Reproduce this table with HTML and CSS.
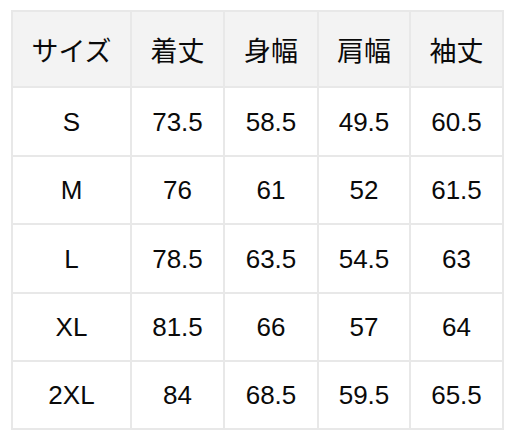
FILE: index.html
```html
<!DOCTYPE html>
<html lang="ja">
<head>
<meta charset="utf-8">
<title>サイズ表</title>
<link rel="stylesheet" href="styles.css">
</head>
<body>
<table class="size-table">
  <colgroup>
    <col class="c-size">
    <col class="c-a">
    <col class="c-b">
    <col class="c-c">
    <col class="c-d">
  </colgroup>
  <thead>
    <tr><th>サイズ</th><th>着丈</th><th>身幅</th><th>肩幅</th><th>袖丈</th></tr>
  </thead>
  <tbody>
    <tr><td>S</td><td>73.5</td><td>58.5</td><td>49.5</td><td>60.5</td></tr>
    <tr><td>M</td><td>76</td><td>61</td><td>52</td><td>61.5</td></tr>
    <tr><td>L</td><td>78.5</td><td>63.5</td><td>54.5</td><td>63</td></tr>
    <tr><td>XL</td><td>81.5</td><td>66</td><td>57</td><td>64</td></tr>
    <tr><td>2XL</td><td>84</td><td>68.5</td><td>59.5</td><td>65.5</td></tr>
  </tbody>
</table>
</body>
</html>
```

FILE: styles.css
```css
html, body {
  margin: 0;
  background: #ffffff;
}
body {
  padding: 10px 0 0 11px;
  font-family: "Liberation Sans", "Noto Sans CJK JP", sans-serif;
  color: #0a0a0a;
}
.size-table {
  table-layout: fixed;
  width: 493px;
  border-collapse: separate;
  border-spacing: 2px;
  background: #e8e8e8;
}
.c-size { width: 117px; }
.c-a { width: 91px; }
.c-b { width: 92px; }
.c-c { width: 90px; }
.c-d { width: 91px; }
.size-table th,
.size-table td {
  padding: 0;
  text-align: center;
  vertical-align: middle;
  font-size: 26px;
  font-weight: normal;
  line-height: 1;
  background: #ffffff;
}
.size-table th {
  background: #f3f3f3;
  height: 74px;
  font-family: "Noto Sans CJK JP", sans-serif;
  font-size: 27px;
}
.size-table tbody tr td { height: 66px; }
.size-table tbody tr:nth-child(1) td,
.size-table tbody tr:nth-child(3) td { height: 67px; }
```
